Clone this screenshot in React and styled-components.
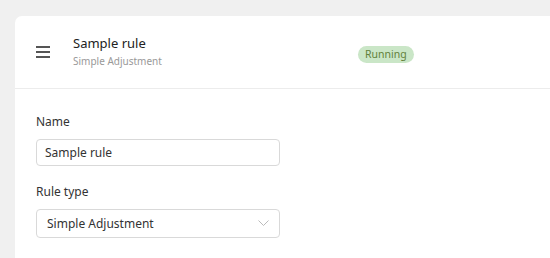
import styled, { createGlobalStyle } from "styled-components"

const Global = createGlobalStyle`
    body {
        margin: 0;
        background: #f0f0f0;
        font-family: "Noto Sans", "Open Sans", sans-serif;
    }
`

const Page = styled.div`
    padding: 16px 0 0 15px;
    height: 258px;
    box-sizing: border-box;
    overflow: hidden;
`

const Card = styled.div`
    background: #fff;
    border-radius: 7px 0 0 0;
    height: 100%;
`

const Header = styled.div`
    display: flex;
    align-items: center;
    height: 72px;
    padding-left: 21px;
    border-bottom: 1px solid #ececec;
`

const Menu = styled.div`
    display: flex;
    flex-direction: column;
    gap: 3.5px;
    width: 14px;
    margin-right: 23px;
    span {
        height: 1.5px;
        background: #555;
    }
`

const Titles = styled.div`
    display: flex;
    flex-direction: column;
    width: 285px;
`

const Title = styled.div`
    font-size: 13px;
    color: #222;
    line-height: 17px;
`

const Subtitle = styled.div`
    font-size: 10px;
    color: #999;
    line-height: 15px;
    margin-top: 2px;
`

const Badge = styled.span`
    background: #cae6c7;
    color: #62813a;
    font-size: 10.5px;
    border-radius: 9px;
    padding: 0 7px;
    height: 17px;
    line-height: 17px;
    margin-top: 5px;
`

const Form = styled.div`
    padding: 25px 0 0 21px;
    width: 244px;
`

const Label = styled.div`
    font-size: 12px;
    color: #333;
    line-height: 16px;
    margin-bottom: 9px;
`

const Field = styled.div`
    display: flex;
    align-items: center;
    justify-content: space-between;
    height: ${p => p.$h}px;
    border: 1px solid #d9d9d9;
    border-radius: 4px;
    padding: 0 ${p => p.$pl}px 0 ${p => p.$pl}px;
    font-size: 12px;
    color: #333;
    margin-bottom: ${p => p.$mb}px;
`

export default function App() {
    return (
        <Page>
            <Global />
            <Card>
                <Header>
                    <Menu><span /><span /><span /></Menu>
                    <Titles>
                        <Title>Sample rule</Title>
                        <Subtitle>Simple Adjustment</Subtitle>
                    </Titles>
                    <Badge>Running</Badge>
                </Header>
                <Form>
                    <Label>Name</Label>
                    <Field $h={25} $pl={8} $mb={18}>Sample rule</Field>
                    <Label>Rule type</Label>
                    <Field $h={27} $pl={10} $mb={0}>
                        Simple Adjustment
                        <svg width="11" height="7" viewBox="0 0 11 7">
                            <path d="M0.5 0.5 L5.5 5.5 L10.5 0.5" fill="none" stroke="#bbb" strokeWidth="1" />
                        </svg>
                    </Field>
                </Form>
            </Card>
        </Page>
    )
}
